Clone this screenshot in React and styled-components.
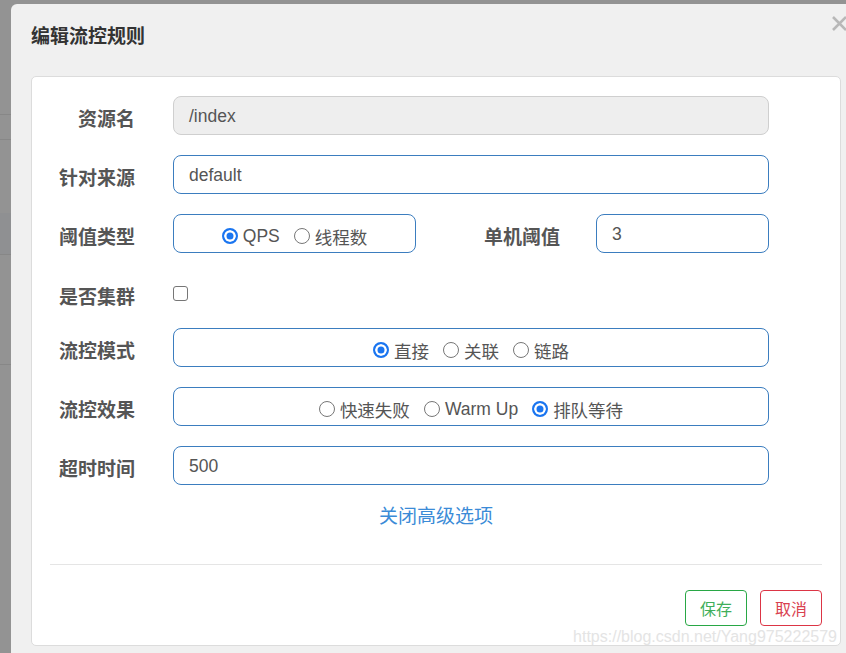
import styled, { createGlobalStyle } from 'styled-components';

const GlobalStyle = createGlobalStyle`
  html, body {
    margin: 0;
    padding: 0;
    background: #939393;
    overflow: hidden;
  }
  * {
    box-sizing: border-box;
  }
`;

const Page = styled.div`
  display: flex;
  width: 846px;
  height: 653px;
  overflow: hidden;
  font-family: 'Liberation Sans', 'Noto Sans CJK SC', sans-serif;
  color: #555;
`;

const Backdrop = styled.div`
  display: flex;
  flex-direction: column;
  flex: 0 0 11px;
`;

const BackRow = styled.div`
  height: ${(p) => p.$h}px;
  background: ${(p) => p.$bg || '#939393'};
  border-bottom: ${(p) => (p.$line ? '1px solid #878787' : 'none')};
`;

const Modal = styled.div`
  position: relative;
  flex: 0 0 850px;
  margin-top: 4px;
  background: #f0f0f0;
  border-top-left-radius: 6px;
`;

const Header = styled.div`
  padding: 20px 20px 26px;
`;

const Title = styled.h4`
  margin: 0;
  font-size: 19px;
  line-height: 26px;
  font-weight: bold;
  color: #333;
`;

const Close = styled.svg`
  position: absolute;
  top: 12px;
  left: 821px;
`;

const Panel = styled.div`
  position: relative;
  margin: 0 20px;
  background: #fff;
  border: 1px solid #dcdcdc;
  border-radius: 5px;
`;

const Form = styled.div`
  display: flex;
  flex-direction: column;
  gap: 20px;
  padding: 19px 71px 0 0;
`;

const Row = styled.div`
  display: flex;
  align-items: center;
  height: ${(p) => p.$h || 39}px;
  padding-top: ${(p) => p.$pt || 0}px;
`;

const Label = styled.div`
  flex: 0 0 ${(p) => p.$w || 103}px;
  margin-left: ${(p) => p.$ml || 0}px;
  text-align: right;
  font-size: 19px;
  font-weight: bold;
  color: #555;
  padding-top: 4px;
`;

const Input = styled.div`
  flex: ${(p) => (p.$w ? `0 0 ${p.$w}px` : '1')};
  margin-left: ${(p) => p.$ml || 38}px;
  height: 39px;
  display: flex;
  align-items: center;
  padding: 2px 0 0 15px;
  font-size: 17.5px;
  color: #555;
  background: ${(p) => (p.$disabled ? '#eeeeee' : '#fff')};
  border: 1px solid ${(p) => (p.$disabled ? '#cfcfcf' : '#3b7dbf')};
  border-radius: 8px;
`;

const RadioBox = styled(Input)`
  justify-content: center;
  padding: 5px 0 0 0;
  gap: 14px;
`;

const RadioItem = styled.label`
  display: flex;
  align-items: center;
  gap: 5px;
  font-size: 17.5px;
  color: #555;
`;

const Dot = styled.span`
  width: 16px;
  height: 16px;
  border-radius: 50%;
  border: ${(p) => (p.$on ? '2px solid #1a75f0' : '1px solid #777')};
  background: ${(p) => (p.$on ? '#1a75f0' : '#fff')};
  box-shadow: ${(p) => (p.$on ? 'inset 0 0 0 2.5px #fff' : 'none')};
`;

const Check = styled.span`
  margin-left: 38px;
  width: 15px;
  height: 15px;
  border: 1px solid #767676;
  border-radius: 3px;
  background: #fff;
`;

const LinkRow = styled.div`
  margin-top: 20px;
  text-align: center;
  font-size: 19px;
  line-height: 24px;
  color: #3b8bd7;
`;

const Divider = styled.div`
  margin: 35px 18px 0;
  border-top: 1px solid #e5e5e5;
`;

const Footer = styled.div`
  display: flex;
  justify-content: flex-end;
  gap: 13px;
  padding: 25px 18px 19px;
`;

const Btn = styled.button`
  width: 62px;
  height: 36px;
  background: #fff;
  border: 1px solid ${(p) => p.$c};
  border-radius: 4px;
  color: ${(p) => p.$t};
  font-family: inherit;
  font-size: 16px;
  padding: 0;
`;

const Watermark = styled.div`
  position: absolute;
  right: 3px;
  bottom: -3px;
  font-size: 16px;
  line-height: 22px;
  color: #e4e4e4;
`;

function Radio({ on, children }) {
  return (
    <RadioItem>
      <Dot $on={on} />
      {children}
    </RadioItem>
  );
}

export default function App() {
  return (
    <>
      <GlobalStyle />
      <Page>
        <Backdrop>
          <BackRow $h={120} $line />
          <BackRow $h={26} $line />
          <BackRow $h={76} />
          <BackRow $h={43} $bg="#8f9092" $line />
          <BackRow $h={115} $line />
          <BackRow $h={300} />
        </Backdrop>
        <Modal>
          <Header>
            <Title>编辑流控规则</Title>
          </Header>
          <Close width="16" height="16" viewBox="0 0 16 16">
            <path d="M1 1 L14 14 M14 1 L1 14" stroke="#b8b8b8" strokeWidth="2.6" />
          </Close>
          <Panel>
            <Form>
              <Row>
                <Label>资源名</Label>
                <Input $disabled>/index</Input>
              </Row>
              <Row>
                <Label>针对来源</Label>
                <Input>default</Input>
              </Row>
              <Row>
                <Label>阈值类型</Label>
                <RadioBox $w={243}>
                  <Radio on>QPS</Radio>
                  <Radio>线程数</Radio>
                </RadioBox>
                <Label $w={79} $ml={65}>单机阈值</Label>
                <Input $ml={36}>3</Input>
              </Row>
              <Row $h={35} $pt={6}>
                <Label>是否集群</Label>
                <Check />
              </Row>
              <Row>
                <Label>流控模式</Label>
                <RadioBox>
                  <Radio on>直接</Radio>
                  <Radio>关联</Radio>
                  <Radio>链路</Radio>
                </RadioBox>
              </Row>
              <Row>
                <Label>流控效果</Label>
                <RadioBox>
                  <Radio>快速失败</Radio>
                  <Radio>Warm Up</Radio>
                  <Radio on>排队等待</Radio>
                </RadioBox>
              </Row>
              <Row>
                <Label>超时时间</Label>
                <Input>500</Input>
              </Row>
            </Form>
            <LinkRow>关闭高级选项</LinkRow>
            <Divider />
            <Footer>
              <Btn $c="#28a745" $t="#3fae5a">保存</Btn>
              <Btn $c="#dc3545" $t="#d9414f">取消</Btn>
            </Footer>
            <Watermark>https://blog.csdn.net/Yang975222579</Watermark>
          </Panel>
        </Modal>
      </Page>
    </>
  );
}
